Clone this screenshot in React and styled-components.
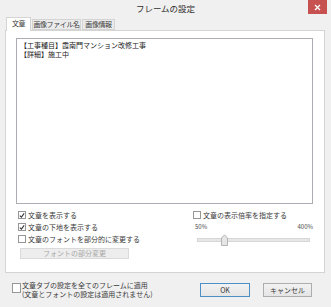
import styled, { createGlobalStyle } from "styled-components";

const GlobalStyle = createGlobalStyle`
  html, body {
    margin: 0;
    padding: 0;
  }
  body {
    background: #f0f0f0;
    font-family: "Noto Sans CJK JP", "Noto Sans", sans-serif;
    color: #3a3a3a;
  }
`;

const Window = styled.div`
  width: 331px;
  height: 307px;
  box-sizing: border-box;
  background: #f0f0f0;
  display: flex;
  flex-direction: column;
`;

const TitleBar = styled.div`
  height: 17px;
  display: grid;
  grid-template-columns: 1fr auto 1fr;
  align-items: start;
`;

const Title = styled.div`
  grid-column: 2;
  font-size: 8.5px;
  line-height: 16px;
  color: #2f2f2f;
`;

const CloseButton = styled.div`
  grid-column: 3;
  justify-self: end;
  margin-right: 4px;
  width: 19px;
  height: 14px;
  background: #c75050;
  display: flex;
  align-items: center;
  justify-content: center;
`;

const TabRow = styled.div`
  display: flex;
  align-items: flex-end;
  height: 13px;
  margin-left: 6px;
  position: relative;
  z-index: 1;
`;

const Tab = styled.div`
  box-sizing: border-box;
  width: ${(p) => p.$w}px;
  height: ${(p) => (p.$active ? 14 : 11)}px;
  margin-bottom: ${(p) => (p.$active ? -1 : 0)}px;
  margin-right: 1px;
  border: 1px solid #d4d4d4;
  border-bottom: ${(p) => (p.$active ? "none" : "1px solid #d4d4d4")};
  background: ${(p) => (p.$active ? "#fff" : "#eaeaea")};
  font-size: 7px;
  line-height: ${(p) => (p.$active ? 11 : 9)}px;
  letter-spacing: -0.4px;
  text-align: center;
  white-space: nowrap;
  color: #3a3a3a;
`;

const Panel = styled.div`
  box-sizing: border-box;
  margin: 0 6px 0 5px;
  height: 243px;
  border: 1px solid #d4d4d4;
  background: #fff;
  display: flex;
  flex-direction: column;
`;

const TextBox = styled.div`
  box-sizing: border-box;
  margin: 7px 11px 0 10px;
  height: 166px;
  border: 1px solid #abadb3;
  background: #fff;
  padding: 2px 3px;
  font-size: 7px;
  line-height: 9px;
  color: #222;
`;

const Options = styled.div`
  display: grid;
  grid-template-columns: 175px 1fr;
  margin-top: 5px;
`;

const Column = styled.div`
  display: flex;
  flex-direction: column;
  padding-left: ${(p) => p.$pad}px;
`;

const Row = styled.label`
  display: flex;
  align-items: center;
  gap: 2px;
  height: 12px;
  font-size: 7px;
  color: #3a3a3a;
  white-space: nowrap;
`;

const Box = styled.span`
  box-sizing: border-box;
  width: 8px;
  height: 8px;
  border: 1px solid #979797;
  background: #fff;
  display: flex;
  align-items: center;
  justify-content: center;
  flex-shrink: 0;
`;

const DisabledButton = styled.div`
  box-sizing: border-box;
  margin: 3px 0 0 2px;
  width: 109px;
  height: 11px;
  border: 1px solid #dadada;
  background: #ededed;
  font-size: 7px;
  line-height: 9px;
  color: #a8a8a8;
  text-align: center;
`;

const ScaleLabels = styled.div`
  display: flex;
  justify-content: space-between;
  width: 118px;
  margin: 2px 0 0 2px;
  font-size: 6px;
  line-height: 8px;
  color: #4a4a4a;
`;

const Slider = styled.div`
  width: 113px;
  height: 12px;
  margin: 3px 0 0 4px;
  display: flex;
  align-items: center;
  position: relative;
`;

const Track = styled.div`
  flex: 1;
  height: 2px;
  background: #e7e7e7;
  border: 1px solid #d6d6d6;
`;

const Thumb = styled.svg`
  position: absolute;
  left: 24px;
  top: 0;
`;

const Footer = styled.div`
  flex: 1;
  display: flex;
  align-items: center;
  padding: 0 19px 0 12px;
`;

const ApplyAll = styled.div`
  display: flex;
  align-items: flex-start;
  gap: 1px;
  flex: 1;
`;

const BigBox = styled(Box)`
  width: 9px;
  height: 10px;
  margin-top: 2px;
`;

const ApplyText = styled.div`
  font-size: 7px;
  line-height: 9px;
  color: #3a3a3a;
  white-space: nowrap;
`;

const Button = styled.div`
  box-sizing: border-box;
  width: ${(p) => p.$w}px;
  height: 14px;
  margin-left: ${(p) => p.$gap || 0}px;
  border: 1px solid ${(p) => (p.$default ? "#4a8fc7" : "#adadad")};
  background: linear-gradient(#f2f2f2, #e5e5e5);
  font-size: 7px;
  line-height: 12px;
  text-align: center;
  color: #3a3a3a;
`;

function Check({ checked }) {
  return (
    <Box>
      {checked && (
        <svg width="7" height="7" viewBox="0 0 7 7">
          <path d="M1 3.6 L2.8 5.4 L6 1" fill="none" stroke="#333" strokeWidth="1.2" />
        </svg>
      )}
    </Box>
  );
}

export default function App() {
  return (
    <>
      <GlobalStyle />
      <Window>
        <TitleBar>
          <Title>フレームの設定</Title>
          <CloseButton>
            <svg width="7" height="7" viewBox="0 0 7 7">
              <path d="M1 1 L6 6 M6 1 L1 6" stroke="#fff" strokeWidth="1.3" />
            </svg>
          </CloseButton>
        </TitleBar>
        <TabRow>
          <Tab $active $w={25}>文章</Tab>
          <Tab $w={49}>画像ファイル名</Tab>
          <Tab $w={33}>画像情報</Tab>
        </TabRow>
        <Panel>
          <TextBox>
            <div>【工事種目】霞南門マンション改修工事</div>
            <div>【詳細】施工中</div>
          </TextBox>
          <Options>
            <Column $pad={12}>
              <Row>
                <Check checked />
                文章を表示する
              </Row>
              <Row>
                <Check checked />
                文章の下地を表示する
              </Row>
              <Row>
                <Check />
                文章のフォントを部分的に変更する
              </Row>
              <DisabledButton>フォントの部分変更</DisabledButton>
            </Column>
            <Column $pad={12}>
              <Row>
                <Check />
                文章の表示倍率を指定する
              </Row>
              <ScaleLabels>
                <span>50%</span>
                <span>400%</span>
              </ScaleLabels>
              <Slider>
                <Track />
                <Thumb width="7" height="12" viewBox="0 0 7 12">
                  <path d="M0.5 11.5 V4 L3.5 0.8 L6.5 4 V11.5 Z" fill="#e6e6e6" stroke="#b5b5b5" />
                </Thumb>
              </Slider>
            </Column>
          </Options>
        </Panel>
        <Footer>
          <ApplyAll>
            <BigBox />
            <ApplyText>
              <div>文章タブの設定を全てのフレームに適用</div>
              <div>(文章とフォントの設定は適用されません)</div>
            </ApplyText>
          </ApplyAll>
          <Button $default $w={50}>OK</Button>
          <Button $w={49} $gap={13}>キャンセル</Button>
        </Footer>
      </Window>
    </>
  );
}
